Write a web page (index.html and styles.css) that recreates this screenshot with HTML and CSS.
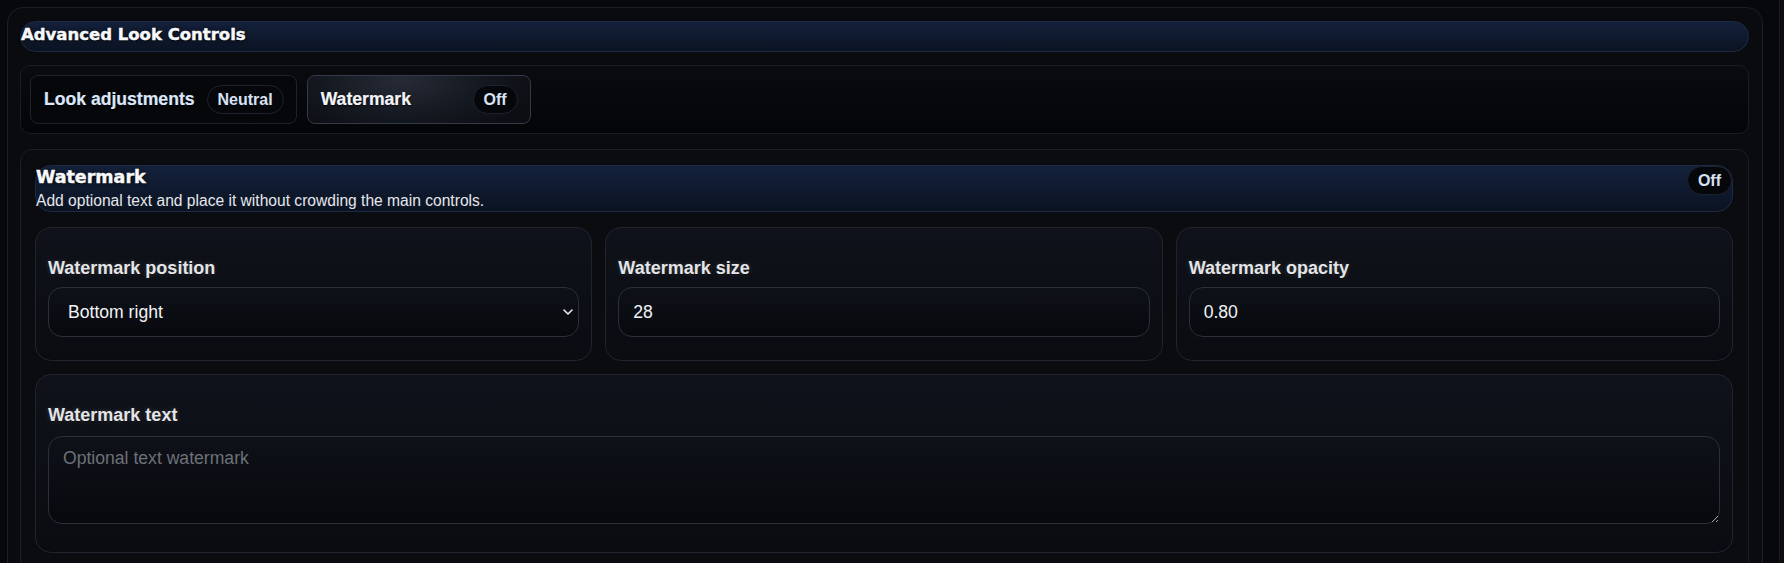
FILE: index.html
```html
<!DOCTYPE html>
<html lang="en">
<head>
<meta charset="utf-8">
<title>Advanced Look Controls</title>
<link rel="stylesheet" href="styles.css">
</head>
<body>
<div class="page">
  <section class="panel">
    <h2 class="panel-title">Advanced Look Controls</h2>
    <div class="tabs">
      <button class="tab" type="button"><span class="tab-label">Look adjustments</span><span class="badge">Neutral</span></button>
      <button class="tab tab-active" type="button"><span class="tab-label">Watermark</span><span class="badge">Off</span></button>
    </div>
    <div class="section">
      <div class="section-head">
        <div class="section-text">
          <h3 class="section-title">Watermark</h3>
          <p class="section-desc">Add optional text and place it without crowding the main controls.</p>
        </div>
        <span class="badge">Off</span>
      </div>
      <div class="grid">
        <div class="field">
          <label class="field-label" for="wm-pos">Watermark position</label>
          <div class="select-wrap">
            <select id="wm-pos" class="control select">
              <option>Bottom right</option>
              <option>Bottom left</option>
              <option>Top right</option>
              <option>Top left</option>
              <option>Center</option>
            </select>
            <svg class="chev" width="10" height="6" viewBox="0 0 10 6" aria-hidden="true"><path d="M1 1l4 4 4-4" fill="none" stroke="#e8ebf0" stroke-width="1.6" stroke-linecap="round" stroke-linejoin="round"/></svg>
          </div>
        </div>
        <div class="field">
          <label class="field-label" for="wm-size">Watermark size</label>
          <input id="wm-size" class="control" type="number" value="28">
        </div>
        <div class="field">
          <label class="field-label" for="wm-op">Watermark opacity</label>
          <input id="wm-op" class="control" type="number" step="0.05" value="0.80">
        </div>
      </div>
      <div class="field field-wide">
        <label class="field-label field-label-wide" for="wm-text">Watermark text</label>
        <textarea id="wm-text" class="control textarea" placeholder="Optional text watermark"></textarea>
      </div>
    </div>
  </section>
</div>
</body>
</html>
```

FILE: styles.css
```css
* { box-sizing: border-box; }

html, body {
  margin: 0;
  height: 100%;
  overflow: hidden;
}

body {
  background: #0b0d11;
  font-family: "Liberation Sans", Arial, sans-serif;
  color: #e8ebf0;
}

.page {
  width: 1780px;
  min-height: 100%;
  padding: 7px 16px 0 7px;
  background: #07080b;
  border-right: 1px solid #171a21;
}

.panel {
  border: 1px solid #1b1e26;
  border-radius: 16px;
  background: #0a0b0f;
  padding: 13px 13px 0 12px;
  min-height: 600px;
}

.panel-title {
  margin: 0;
  font-family: "DejaVu Sans", "Liberation Sans", sans-serif;
  font-weight: 700;
  font-size: 16.5px;
  line-height: 22px;
  padding: 2px 0 5px;
  color: #f7f8fb;
  -webkit-text-stroke: 0.45px #f7f8fb;
  text-shadow: 0 1px 1px rgba(0, 0, 0, 0.9), 0 0 4px rgba(0, 0, 0, 0.8);
  border: 1px solid #1d2a44;
  border-radius: 16px;
  background: linear-gradient(180deg, #14213b 0%, #0b1322 100%);
}

.tabs {
  margin-top: 13px;
  display: flex;
  gap: 10px;
  padding: 9px;
  border: 1px solid #191c23;
  border-radius: 10px;
  background: linear-gradient(180deg, #0a0b0f 0%, #040508 100%);
}

.tab {
  display: flex;
  align-items: center;
  justify-content: space-between;
  gap: 12px;
  min-width: 224px;
  height: 49px;
  padding: 0 12px 0 13px;
  border: 1px solid #1e222b;
  border-radius: 8px;
  background: #06070a;
  font-family: inherit;
  cursor: pointer;
}

.tab-label {
  font-weight: 700;
  font-size: 17.6px;
  color: #dce6fa;
  -webkit-text-stroke: 0.2px #dce6fa;
  text-shadow: 0 1px 2px rgba(0, 0, 0, 0.8);
}

.tab-active {
  border-color: #343a47;
  background: radial-gradient(ellipse 140px 60px at 42% 10%, #262b36 0%, #151921 55%, #0c0e13 100%);
}

.tab-active .tab-label {
  color: #f3f5f9;
  -webkit-text-stroke-color: #f3f5f9;
}

.badge {
  display: inline-block;
  height: 29px;
  line-height: 27px;
  padding: 0 10px;
  border: 1px solid #1c2230;
  border-radius: 999px;
  background: #06070a;
  font-family: "Liberation Sans", Arial, sans-serif;
  font-weight: 700;
  font-size: 16px;
  color: #d8e2f5;
  white-space: nowrap;
}

.section {
  margin-top: 15px;
  border: 1px solid #1b1e25;
  border-radius: 12px;
  background: #0b0c10;
  padding: 15px 15px 20px 14px;
}

.section-head {
  display: flex;
  justify-content: space-between;
  align-items: flex-start;
  padding: 1px 0 1px;
  border: 1px solid #1d2a44;
  border-radius: 16px;
  background: linear-gradient(180deg, #14213b 0%, #0b1322 100%);
}

.section-head .badge {
  margin-top: -1px;
}

.section-title {
  margin: 0;
  font-family: "DejaVu Sans", "Liberation Sans", sans-serif;
  font-weight: 700;
  font-size: 17.5px;
  color: #f7f8fb;
  -webkit-text-stroke: 0.45px #f7f8fb;
  text-shadow: 0 1px 1px rgba(0, 0, 0, 0.9), 0 0 4px rgba(0, 0, 0, 0.8);
}

.section-desc {
  margin: 5px 0 0;
  font-size: 15.6px;
  color: #e4e7ec;
}

.grid {
  margin-top: 15px;
  display: grid;
  grid-template-columns: repeat(3, 1fr);
  gap: 13px;
}

.field {
  display: flex;
  flex-direction: column;
  padding: 30px 12px 23px;
  border: 1px solid #20242e;
  border-radius: 16px;
  background: linear-gradient(180deg, #0f121a 0%, #0a0c11 100%);
}

.field-wide {
  margin-top: 13px;
  padding-bottom: 28px;
}

.field-label {
  margin-bottom: 8px;
  font-weight: 700;
  font-size: 18px;
  color: #e3e5e9;
  text-shadow: 0 0 5px rgba(255, 255, 255, 0.18), 0 1px 1px rgba(0, 0, 0, 0.9);
}

.field-label-wide {
  margin-bottom: 10px;
}

.control {
  display: block;
  width: 100%;
  height: 50px;
  padding: 0 14px;
  border: 1px solid #2a2f3a;
  border-radius: 14px;
  background: linear-gradient(180deg, #0e1118 0%, #07090d 100%);
  font-family: "Liberation Sans", Arial, sans-serif;
  font-size: 17.6px;
  color: #f1f3f6;
  outline: none;
}

input[type="number"] {
  -moz-appearance: textfield;
  appearance: textfield;
}

input[type="number"]::-webkit-inner-spin-button,
input[type="number"]::-webkit-outer-spin-button {
  -webkit-appearance: none;
  margin: 0;
}

.select-wrap {
  position: relative;
}

.select {
  -webkit-appearance: none;
  appearance: none;
  padding-left: 19px;
}

.select option {
  background: #0e1118;
  color: #f1f3f6;
}

.chev {
  position: absolute;
  right: 6px;
  top: 22px;
}

.textarea {
  height: 88px;
  padding: 11px 14px;
  resize: vertical;
  line-height: normal;
}

.textarea::placeholder {
  color: #6c7179;
}
```
